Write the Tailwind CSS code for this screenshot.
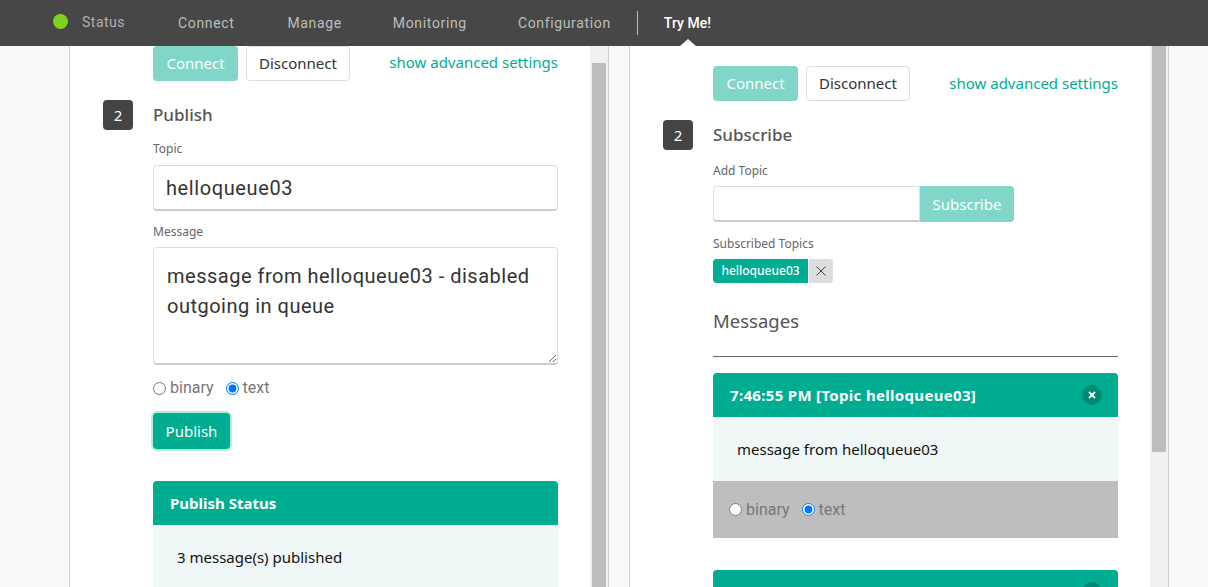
<!DOCTYPE html>
<html lang="en">
<head>
  <meta charset="UTF-8" />
  <title>Try Me!</title>
  <script src="https://cdn.jsdelivr.net/npm/@tailwindcss/browser@4"></script>
</head>
<body class="h-screen overflow-hidden flex flex-col bg-[#f9f9f9] font-['Noto_Sans',sans-serif] text-[15px]">

  <!-- top nav -->
  <nav class="relative h-[46px] shrink-0 flex items-center bg-[#474747] text-[#bdbdbd] text-sm tracking-[0.65px] font-['Roboto',sans-serif] z-10">
    <span class="ml-[53px] w-[15px] h-[15px] -mt-[4px] rounded-full bg-[#7ed321]"></span>
    <a class="ml-[14px] -mt-[3px] text-[#b0b0b0] tracking-[0.5px]">Status</a>
    <a class="ml-[53px]">Connect</a>
    <a class="ml-[53px]">Manage</a>
    <a class="ml-[51px]">Monitoring</a>
    <a class="ml-[51px]">Configuration</a>
    <span class="ml-[26px] w-px h-[24px] bg-[#bbbbbb]"></span>
    <a class="ml-[26px] text-white font-medium tracking-[0.05px]">Try Me!</a>
    <span class="absolute left-[680px] bottom-0 w-0 h-0 border-x-[8px] border-x-transparent border-b-[7px] border-b-white"></span>
  </nav>

  <main class="flex-1 min-h-0 flex overflow-hidden">

    <!-- publish panel -->
    <section class="ml-[69px] w-[540px] flex border-x border-[#cfcfcf] bg-white">
      <div class="flex-1 min-w-0 pl-[83px] pr-[32px]">
        <div class="flex items-start">
          <button class="w-[85px] h-[35px] rounded bg-[#80d6c8] text-white">Connect</button>
          <button class="ml-2 w-[104px] h-[35px] rounded border border-[#dddddd] text-[#333333]">Disconnect</button>
          <a class="ml-auto mt-[5px] text-[#00ad90]">show advanced settings</a>
        </div>
        <div class="relative mt-[19px] h-[30px] flex items-center">
          <span class="absolute -left-[50px] top-0 w-[30px] h-[30px] rounded bg-[#444444] text-white flex items-center justify-center text-[15px]">2</span>
          <h2 class="text-[17px] -mt-[1px] text-[#555555] font-medium">Publish</h2>
        </div>
        <label class="block mt-[10px] text-xs leading-[18px] text-[#666666]">Topic</label>
        <input value="helloqueue03" class="block mt-[7px] w-full h-[46px] px-3 rounded border border-[#dddddd] border-b-2 border-b-[#cccccc] text-xl text-[#333333] tracking-[0.6px] font-['Roboto',sans-serif]" />
        <label class="block mt-[12px] text-xs leading-[18px] text-[#666666]">Message</label>
        <textarea class="block mt-[6px] w-full h-[118px] pl-[13px] pr-3 py-[13px] rounded border border-[#dddddd] border-b-2 border-b-[#cccccc] text-xl leading-[30px] text-[#333333] tracking-[0.5px] font-['Roboto',sans-serif]">message from helloqueue03 - disabled outgoing in queue</textarea>
        <div class="mt-[14px] h-[18px] flex items-center text-base text-[#777777] font-['Roboto',sans-serif]">
          <input type="radio" name="pub" class="w-[13px] h-[13px] m-0" />
          <span class="ml-1">binary</span>
          <input type="radio" name="pub" checked class="ml-3 w-[13px] h-[13px] m-0" />
          <span class="ml-1">text</span>
        </div>
        <button class="block mt-[16px] w-[77px] h-[36px] rounded bg-[#00ad90] text-white ring-2 ring-[#b3ece0]">Publish</button>
        <div class="mt-[32px] rounded-t bg-[#eff8f6]">
          <div class="h-[44px] px-[17px] flex items-center rounded-t bg-[#00ad90] text-white font-bold">Publish Status</div>
          <p class="h-[64px] px-[24px] flex items-center text-[#111111]">3 message(s) published</p>
        </div>
      </div>
      <div class="w-[18px] shrink-0 bg-[#f1f1f1] px-[2px] pt-[17px]">
        <div class="h-full bg-[#bdbdbd]"></div>
      </div>
    </section>

    <!-- subscribe panel -->
    <section class="ml-[20px] w-[540px] flex border-x border-[#cfcfcf] bg-white">
      <div class="flex-1 min-w-0 pl-[83px] pr-[32px] pt-[20px]">
        <div class="flex items-start">
          <button class="w-[85px] h-[35px] rounded bg-[#80d6c8] text-white">Connect</button>
          <button class="ml-2 w-[104px] h-[35px] rounded border border-[#dddddd] text-[#333333]">Disconnect</button>
          <a class="ml-auto mt-[6px] text-[#00ad90]">show advanced settings</a>
        </div>
        <div class="relative mt-[19px] h-[30px] flex items-center">
          <span class="absolute -left-[50px] top-0 w-[30px] h-[30px] rounded bg-[#444444] text-white flex items-center justify-center text-[15px]">2</span>
          <h2 class="text-[17px] text-[#555555] font-medium">Subscribe</h2>
        </div>
        <label class="block mt-[12px] text-xs leading-[18px] text-[#666666]">Add Topic</label>
        <div class="mt-[6px] flex">
          <input class="w-[207px] h-[36px] rounded-l border border-[#dddddd] border-b-2 border-b-[#cccccc]" />
          <button class="w-[94px] h-[36px] rounded-r bg-[#80d6c8] text-white">Subscribe</button>
        </div>
        <label class="block mt-[13px] text-xs leading-[18px] text-[#666666]">Subscribed Topics</label>
        <div class="mt-[6px] flex h-[24px] items-stretch">
          <span class="w-[95px] rounded-l bg-[#00ad90] text-white text-xs font-medium flex items-center justify-center">helloqueue03</span>
          <span class="ml-px w-[24px] rounded-r bg-[#dddddd] flex items-center justify-center">
            <svg viewBox="0 0 10 10" class="w-[10px] h-[10px] stroke-[#444444]" fill="none" stroke-width="1"><path d="M.5.5l9 9M9.5.5l-9 9" /></svg>
          </span>
        </div>
        <h3 class="mt-[25px] text-[18.5px] leading-[26px] text-[#555555]">Messages</h3>
        <hr class="mt-[22px] border-[#666666]" />

        <div class="mt-[16px] rounded-t bg-[#eff8f6]">
          <div class="h-[44px] pl-[17px] pr-[16px] flex items-center justify-between rounded-t bg-[#00ad90] text-white font-bold">
            <span class="tracking-[0.32px]">7:46:55 PM [Topic helloqueue03]</span>
            <span class="w-5 h-5 rounded-full bg-[#008a73] flex items-center justify-center">
              <svg viewBox="0 0 8 8" class="w-2 h-2 stroke-white" fill="none" stroke-width="1.8"><path d="M1 1l6 6M7 1L1 7" /></svg>
            </span>
          </div>
          <p class="h-[64px] px-[24px] flex items-center text-[#111111]">message from helloqueue03</p>
          <div class="h-[57px] px-[16px] flex items-center bg-[#bebebe] text-base text-[#777777] font-['Roboto',sans-serif]">
            <input type="radio" name="msg1" class="w-[13px] h-[13px] m-0" />
            <span class="ml-1">binary</span>
            <input type="radio" name="msg1" checked class="ml-3 w-[13px] h-[13px] m-0" />
            <span class="ml-1">text</span>
          </div>
        </div>

        <div class="mt-[32px] rounded-t bg-[#eff8f6]">
          <div class="h-[44px] pl-[17px] pr-[16px] flex items-center justify-between rounded-t bg-[#00ad90] text-white font-bold">
            <span class="tracking-[0.32px]">7:46:50 PM [Topic helloqueue03]</span>
            <span class="w-5 h-5 rounded-full bg-[#008a73]"></span>
          </div>
        </div>
      </div>
      <div class="w-[18px] shrink-0 bg-[#f1f1f1] px-[2px]">
        <div class="h-[406px] bg-[#bdbdbd]"></div>
      </div>
    </section>
  </main>
</body>
</html>
